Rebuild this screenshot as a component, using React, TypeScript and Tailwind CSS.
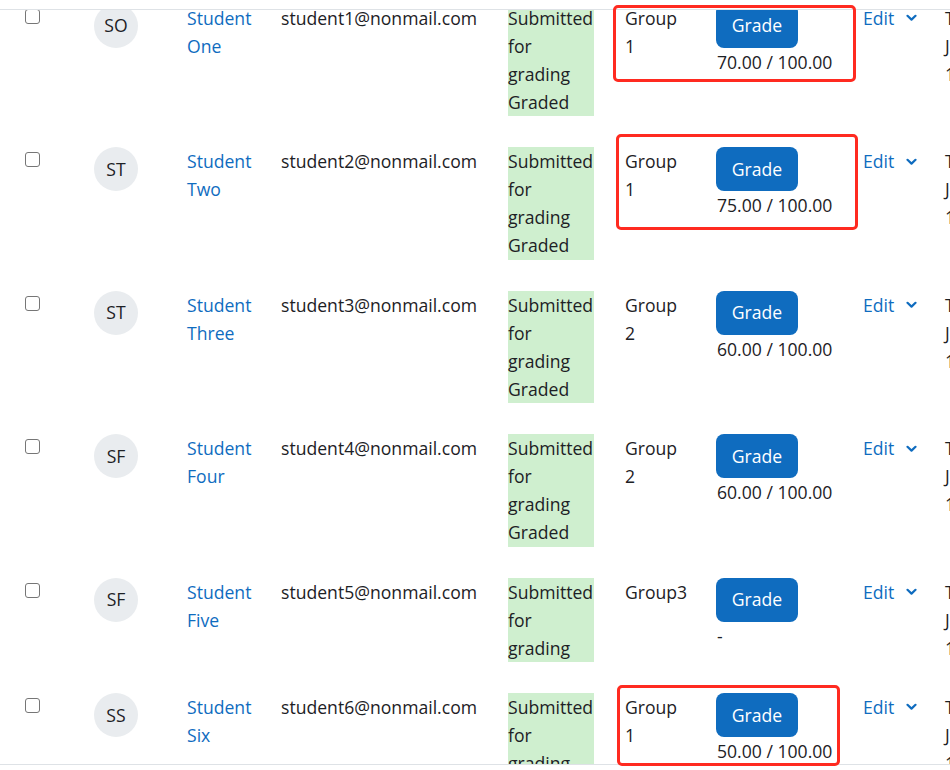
import React from 'react';

type Row = {
  initials: string;
  first: string;
  last: string;
  email: string;
  graded: boolean;
  group: string[];
  grade: string;
  date: string[];
};

const rows: Row[] = [
  { initials: 'SO', first: 'Student', last: 'One', email: 'student1@nonmail.com', graded: true, group: ['Group', '1'], grade: '70.00 / 100.00', date: ['Tuesday, 27', 'June 2023,', '11:15 AM'] },
  { initials: 'ST', first: 'Student', last: 'Two', email: 'student2@nonmail.com', graded: true, group: ['Group', '1'], grade: '75.00 / 100.00', date: ['Tuesday, 27', 'June 2023,', '11:16 AM'] },
  { initials: 'ST', first: 'Student', last: 'Three', email: 'student3@nonmail.com', graded: true, group: ['Group', '2'], grade: '60.00 / 100.00', date: ['Tuesday, 27', 'June 2023,', '11:17 AM'] },
  { initials: 'SF', first: 'Student', last: 'Four', email: 'student4@nonmail.com', graded: true, group: ['Group', '2'], grade: '60.00 / 100.00', date: ['Tuesday, 27', 'June 2023,', '11:18 AM'] },
  { initials: 'SF', first: 'Student', last: 'Five', email: 'student5@nonmail.com', graded: false, group: ['Group3'], grade: '-', date: ['Tuesday, 27', 'June 2023,', '11:19 AM'] },
  { initials: 'SS', first: 'Student', last: 'Six', email: 'student6@nonmail.com', graded: false, group: ['Group', '1'], grade: '50.00 / 100.00', date: ['Tuesday, 27', 'June 2023,', '11:20 AM'] },
];

// red annotation boxes drawn over the screenshot
const marks = [
  'left-[613px] top-[5px] w-[243px] h-[77px]',
  'left-[616px] top-[134px] w-[242px] h-[96px]',
  'left-[617px] top-[685px] w-[223px] h-[81px]',
];

const Chevron = () => (
  <svg width="11" height="8" viewBox="0 0 11 8" className="ml-[12px] mt-[1px]">
    <path d="M1.5 1.8 L5.5 5.6 L9.5 1.8" fill="none" stroke="#0f6cbf" strokeWidth="2.2" strokeLinecap="round" strokeLinejoin="round" />
  </svg>
);

const StudentRow = ({ r }: { r: Row }) => (
  <div className="flex pt-[15.5px] pb-[15.5px] pl-[25px] leading-[28.125px]">
    <div className="w-[69px] shrink-0">
      <div className="mt-[5px] w-[15px] h-[15px] rounded-[3px] border border-[#767676] bg-white" />
    </div>
    <div className="w-[93px] shrink-0">
      <div className="w-[44px] h-[44px] rounded-full bg-[#e9ecef] flex items-center justify-center text-[#1d2125]">
        {r.initials}
      </div>
    </div>
    <div className="w-[94px] shrink-0 text-[#0f6cbf]">
      {r.first}
      <br />
      {r.last}
    </div>
    <div className="w-[227px] shrink-0">{r.email}</div>
    <div className="w-[117px] shrink-0">
      <div className="w-[86px] bg-[#cfefcf]">
        Submitted
        <br />
        for
        <br />
        grading
        {r.graded && (
          <>
            <br />
            Graded
          </>
        )}
      </div>
    </div>
    <div className="w-[91px] shrink-0">
      {r.group.map((g, i) => (
        <div key={i}>{g}</div>
      ))}
    </div>
    <div className="w-[147px] shrink-0">
      <div className="w-[82px] h-[44px] rounded-[8px] bg-[#0f6cbf] text-white flex items-center justify-center">
        Grade
      </div>
      <div className="pl-[1px]">{r.grade}</div>
    </div>
    <div className="w-[82px] shrink-0">
      <div className="flex items-center text-[#0f6cbf]">
        Edit
        <Chevron />
      </div>
    </div>
    <div className="shrink-0 whitespace-nowrap">
      {r.date.map((d, i) => (
        <div key={i}>{d}</div>
      ))}
    </div>
  </div>
);

export default function App() {
  return (
    <div className="relative w-[950px] h-[770px] overflow-hidden bg-white text-[#1d2125] text-[17.6px] font-['Open_Sans',sans-serif]">
      <div className="h-[10px] border-b border-[#dee2e6]" />
      <div className="h-[754px] overflow-hidden">
        <div className="-mt-[22px]">
          {rows.map((r, i) => (
            <StudentRow key={i} r={r} />
          ))}
        </div>
      </div>
      <div className="border-t border-[#dee2e6]" />
      {marks.map((m, i) => (
        <div key={i} className={`absolute ${m} border-[3.5px] border-[#ff2a20] rounded-[5px] pointer-events-none`} />
      ))}
    </div>
  );
}
